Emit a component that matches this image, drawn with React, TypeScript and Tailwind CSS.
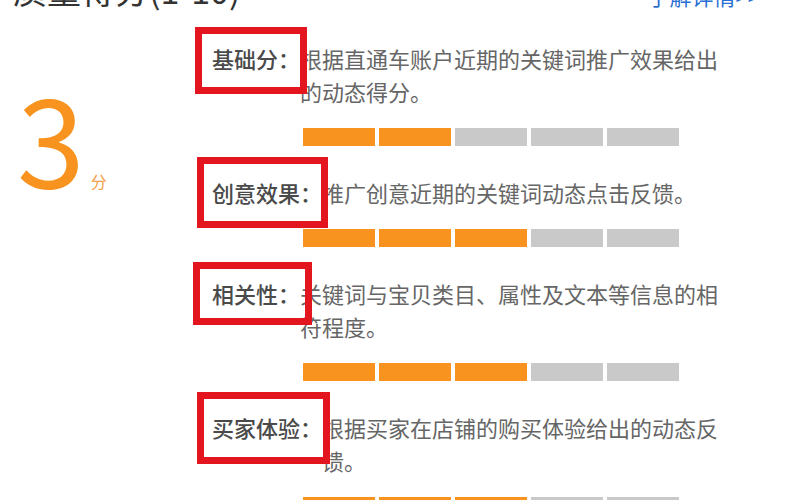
import React from "react";

type Item = {
  label: string;
  desc: string;
  filled: number;
  box: string;
};

const items: Item[] = [
  {
    label: "基础分：",
    desc: "根据直通车账户近期的关键词推广效果给出的动态得分。",
    filled: 2,
    box: "-left-[17px] -right-[7px] -top-[15px] -bottom-[19px]",
  },
  {
    label: "创意效果：",
    desc: "推广创意近期的关键词动态点击反馈。",
    filled: 3,
    box: "-left-[15px] -right-[6px] -top-[19px] -bottom-[19px]",
  },
  {
    label: "相关性：",
    desc: "关键词与宝贝类目、属性及文本等信息的相符程度。",
    filled: 3,
    box: "-left-[19px] -right-[12px] -top-[15px] -bottom-[15px]",
  },
  {
    label: "买家体验：",
    desc: "根据买家在店铺的购买体验给出的动态反馈。",
    filled: 3,
    box: "-left-[15px] -right-[8px] -top-[19px] -bottom-[20px]",
  },
];

function ScoreBar({ filled }: { filled: number }) {
  return (
    <div className="ml-[91px] mt-[20px] flex gap-[4px]">
      {[0, 1, 2, 3, 4].map((i) => (
        <div
          key={i}
          className={
            i < filled
              ? "h-[18px] w-[72px] bg-[#f7931e]"
              : "h-[18px] w-[72px] bg-[#c9c9c9]"
          }
        />
      ))}
    </div>
  );
}

function Row({ item }: { item: Item }) {
  return (
    <div className="mb-[30px]">
      <div className="flex items-start text-[22px] leading-[33px]">
        <span className="relative h-[33px] shrink-0 font-medium text-[#4a4a4a]">
          {item.label}
          <span
            className={`pointer-events-none absolute z-10 border-[7px] border-[#e3161f] ${item.box}`}
          />
        </span>
        <p className="flex-1 text-[#666666]">{item.desc}</p>
      </div>
      <ScoreBar filled={item.filled} />
    </div>
  );
}

export default function App() {
  return (
    <div
      className="relative h-[500px] w-[800px] overflow-hidden bg-white"
      style={{ fontFamily: '"Noto Sans CJK SC", "Noto Sans", sans-serif' }}
    >
      <div className="-mt-[27px] flex items-end justify-between pl-[13px] pr-[40px]">
        <div className="text-[34px] leading-[34px] text-[#333333]">质量得分(1-10)</div>
        <div className="text-[22px] leading-[24px] text-[#2b6fd4]">了解详情&gt;&gt;</div>
      </div>

      <div className="mt-[35px] flex">
        <div className="w-[212px] shrink-0 pl-[17px] pt-[32px]">
          <div className="flex items-baseline gap-[6px] text-[#f7931e]">
            <span className="text-[122px] leading-none">3</span>
            <span className="text-[16px] leading-none text-[#f4a04a]">分</span>
          </div>
        </div>
        <div className="w-[518px] shrink-0">
          {items.map((item) => (
            <Row key={item.label} item={item} />
          ))}
        </div>
      </div>
    </div>
  );
}
